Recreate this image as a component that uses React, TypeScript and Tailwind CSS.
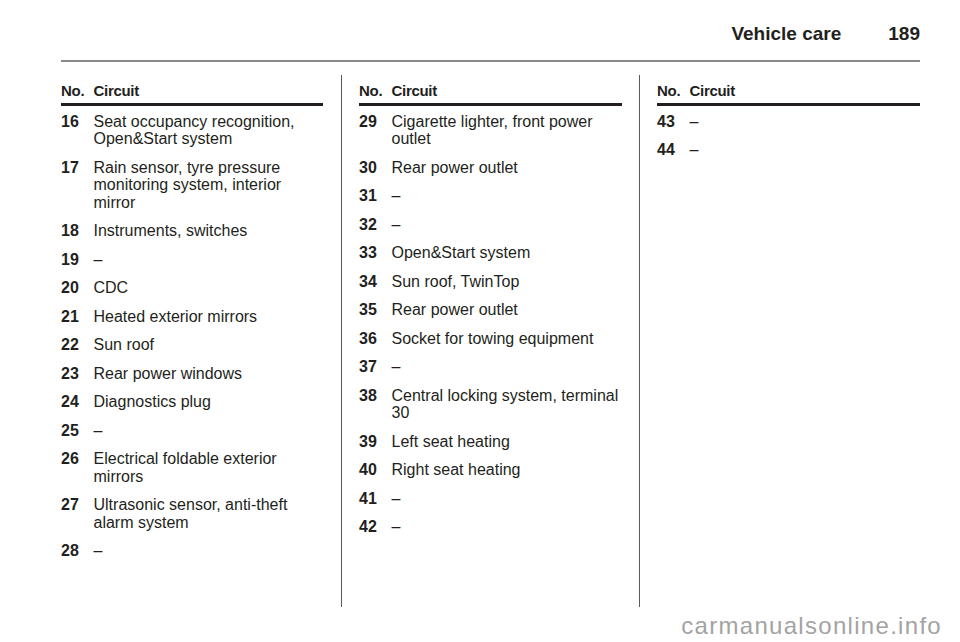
type Row = { no: string; text: string };

const columns: Row[][] = [
  [
    { no: "16", text: "Seat occupancy recognition, Open&Start system" },
    { no: "17", text: "Rain sensor, tyre pressure monitoring system, interior mirror" },
    { no: "18", text: "Instruments, switches" },
    { no: "19", text: "–" },
    { no: "20", text: "CDC" },
    { no: "21", text: "Heated exterior mirrors" },
    { no: "22", text: "Sun roof" },
    { no: "23", text: "Rear power windows" },
    { no: "24", text: "Diagnostics plug" },
    { no: "25", text: "–" },
    { no: "26", text: "Electrical foldable exterior mirrors" },
    { no: "27", text: "Ultrasonic sensor, anti-theft alarm system" },
    { no: "28", text: "–" },
  ],
  [
    { no: "29", text: "Cigarette lighter, front power outlet" },
    { no: "30", text: "Rear power outlet" },
    { no: "31", text: "–" },
    { no: "32", text: "–" },
    { no: "33", text: "Open&Start system" },
    { no: "34", text: "Sun roof, TwinTop" },
    { no: "35", text: "Rear power outlet" },
    { no: "36", text: "Socket for towing equipment" },
    { no: "37", text: "–" },
    { no: "38", text: "Central locking system, terminal 30" },
    { no: "39", text: "Left seat heating" },
    { no: "40", text: "Right seat heating" },
    { no: "41", text: "–" },
    { no: "42", text: "–" },
  ],
  [
    { no: "43", text: "–" },
    { no: "44", text: "–" },
  ],
];

function FuseColumn({ rows, width }: { rows: Row[]; width: string }) {
  return (
    <div className={`${width} shrink-0 pt-[7px]`}>
      {/* table head */}
      <div className="flex text-[15px] font-bold leading-[17.5px] tracking-[-0.3px] pb-[3.5px] border-b-[3px] border-[#231f20]">
        <span className="w-[32.5px] shrink-0">No.</span>
        <span>Circuit</span>
      </div>
      <div className="flex flex-col gap-[11px] pt-[6.5px] text-[16px] leading-[17.5px]">
        {rows.map((r) => (
          <div key={r.no} className="flex">
            <span className="w-[32.5px] shrink-0 font-bold">{r.no}</span>
            <span className="flex-1">{r.text}</span>
          </div>
        ))}
      </div>
    </div>
  );
}

export default function App() {
  return (
    <div className="w-[960px] h-[642px] overflow-hidden bg-white text-[#231f20] font-['Liberation_Sans',Arial,sans-serif]">
      <header className="flex justify-end gap-[47px] pl-[61px] pr-[40px] pt-[24px] text-[19px] font-bold leading-[19px]">
        <span>Vehicle care</span>
        <span>189</span>
      </header>
      <div className="ml-[61px] mr-[40px] mt-[17px] h-[2px] bg-[#8a8a8a]" />

      <div className="flex ml-[61px] mt-[13px] h-[532px]">
        <FuseColumn rows={columns[0]} width="w-[262px]" />
        <div className="w-px bg-[#5a5a5a] ml-[18px] mr-[17px]" />
        <FuseColumn rows={columns[1]} width="w-[263px]" />
        <div className="w-px bg-[#5a5a5a] mx-[17px]" />
        <FuseColumn rows={columns[2]} width="w-[263px]" />
      </div>

      <div className="flex justify-end pr-[18px] pt-[5px] text-[24px] leading-[28px] tracking-[1.3px] text-[#a3a3a3]">
        carmanualsonline.info
      </div>
    </div>
  );
}
